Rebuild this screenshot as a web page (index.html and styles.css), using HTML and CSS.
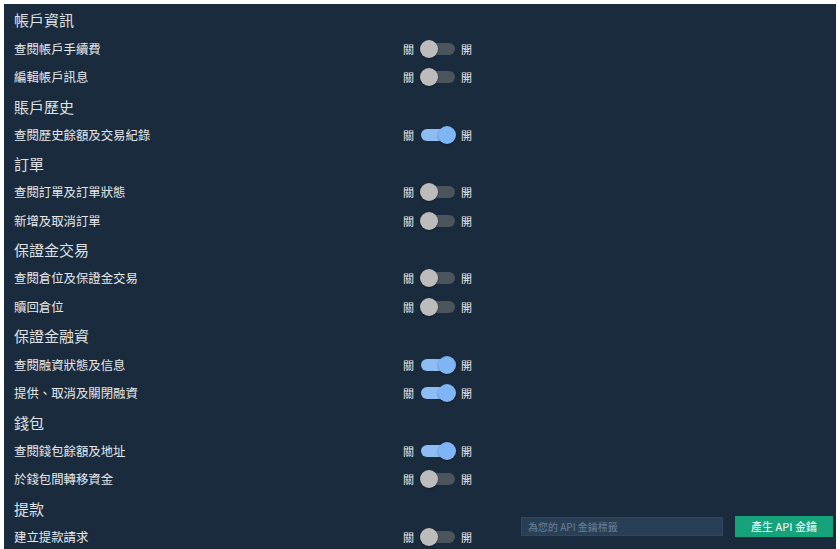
FILE: index.html
```html
<!DOCTYPE html>
<html lang="zh-Hant">
<head>
<meta charset="utf-8">
<link rel="stylesheet" href="styles.css">
</head>
<body>
<div class="panel">
  <div class="row head">帳戶資訊</div>
  <div class="row item"><span class="label">查閱帳戶手續費</span><span class="tg"><span class="t">關</span><span class="sw"><span class="knob"></span></span><span class="t">開</span></span></div>
  <div class="row item"><span class="label">編輯帳戶訊息</span><span class="tg"><span class="t">關</span><span class="sw"><span class="knob"></span></span><span class="t">開</span></span></div>
  <div class="row head">賬戶歷史</div>
  <div class="row item"><span class="label">查閱歷史餘額及交易紀錄</span><span class="tg"><span class="t">關</span><span class="sw on"><span class="knob"></span></span><span class="t">開</span></span></div>
  <div class="row head">訂單</div>
  <div class="row item"><span class="label">查閱訂單及訂單狀態</span><span class="tg"><span class="t">關</span><span class="sw"><span class="knob"></span></span><span class="t">開</span></span></div>
  <div class="row item"><span class="label">新增及取消訂單</span><span class="tg"><span class="t">關</span><span class="sw"><span class="knob"></span></span><span class="t">開</span></span></div>
  <div class="row head">保證金交易</div>
  <div class="row item"><span class="label">查閱倉位及保證金交易</span><span class="tg"><span class="t">關</span><span class="sw"><span class="knob"></span></span><span class="t">開</span></span></div>
  <div class="row item"><span class="label">贖回倉位</span><span class="tg"><span class="t">關</span><span class="sw"><span class="knob"></span></span><span class="t">開</span></span></div>
  <div class="row head">保證金融資</div>
  <div class="row item"><span class="label">查閱融資狀態及信息</span><span class="tg"><span class="t">關</span><span class="sw on"><span class="knob"></span></span><span class="t">開</span></span></div>
  <div class="row item"><span class="label">提供、取消及關閉融資</span><span class="tg"><span class="t">關</span><span class="sw on"><span class="knob"></span></span><span class="t">開</span></span></div>
  <div class="row head">錢包</div>
  <div class="row item"><span class="label">查閱錢包餘額及地址</span><span class="tg"><span class="t">關</span><span class="sw on"><span class="knob"></span></span><span class="t">開</span></span></div>
  <div class="row item"><span class="label">於錢包間轉移資金</span><span class="tg"><span class="t">關</span><span class="sw"><span class="knob"></span></span><span class="t">開</span></span></div>
  <div class="row head">提款</div>
  <div class="row item last"><span class="label">建立提款請求</span><span class="tg"><span class="t">關</span><span class="sw"><span class="knob"></span></span><span class="t">開</span></span>
    <div class="form"><input class="inp" type="text" placeholder="為您的 API 金鑰標籤"><button class="btn">產生 API 金鑰</button></div>
  </div>
</div>
</body>
</html>
```

FILE: styles.css
```css
html, body {
  margin: 0;
  padding: 0;
  background: #ffffff;
  height: 100%;
  overflow: hidden;
}
body {
  font-family: "Noto Sans CJK TC", "Noto Sans", "Liberation Sans", sans-serif;
}
.panel {
  margin: 4px 4px 0 4px;
  height: 545px;
  background: #1a2b3e;
  padding: 1.6px 0 0 10px;
  box-sizing: border-box;
  overflow: hidden;
}
.row {
  height: 28.72px;
  display: flex;
  align-items: center;
  color: #e6e9ec;
}
.head {
  font-size: 15px;
  color: #dfe3e7;
}
.item {
  font-size: 12.4px;
}
.label {
  width: 389px;
  flex: none;
}
.tg {
  display: flex;
  align-items: center;
  font-size: 11px;
  color: #e8eaed;
}
.sw {
  position: relative;
  width: 34px;
  height: 12px;
  border-radius: 6px;
  background: #4c545c;
  margin: 0 6px 0 7px;
}
.knob {
  position: absolute;
  left: -1px;
  top: -3px;
  width: 18px;
  height: 18px;
  border-radius: 50%;
  background: #bcbcbc;
  box-shadow: 0 1px 2px rgba(0,0,0,0.35);
}
.sw.on {
  background: #8dbdf2;
}
.sw.on .knob {
  left: 17px;
  background: #7fb4f5;
}
.form {
  display: flex;
  align-self: flex-start;
  margin-top: -6px;
  margin-left: 49px;
}
.inp {
  width: 202px;
  height: 19px;
  box-sizing: border-box;
  background: #293f56;
  border: 1px solid #2f4862;
  color: #c8d0d8;
  font-family: inherit;
  font-size: 10px;
  padding: 0 6px;
  outline: none;
}
.inp::placeholder {
  color: #6c8096;
}
.btn {
  margin-left: 12px;
  width: 98px;
  height: 21px;
  margin-top: -1px;
  background: #16a37c;
  border: 0;
  color: #ffffff;
  font-family: inherit;
  font-size: 11px;
  padding: 0;
}
```
